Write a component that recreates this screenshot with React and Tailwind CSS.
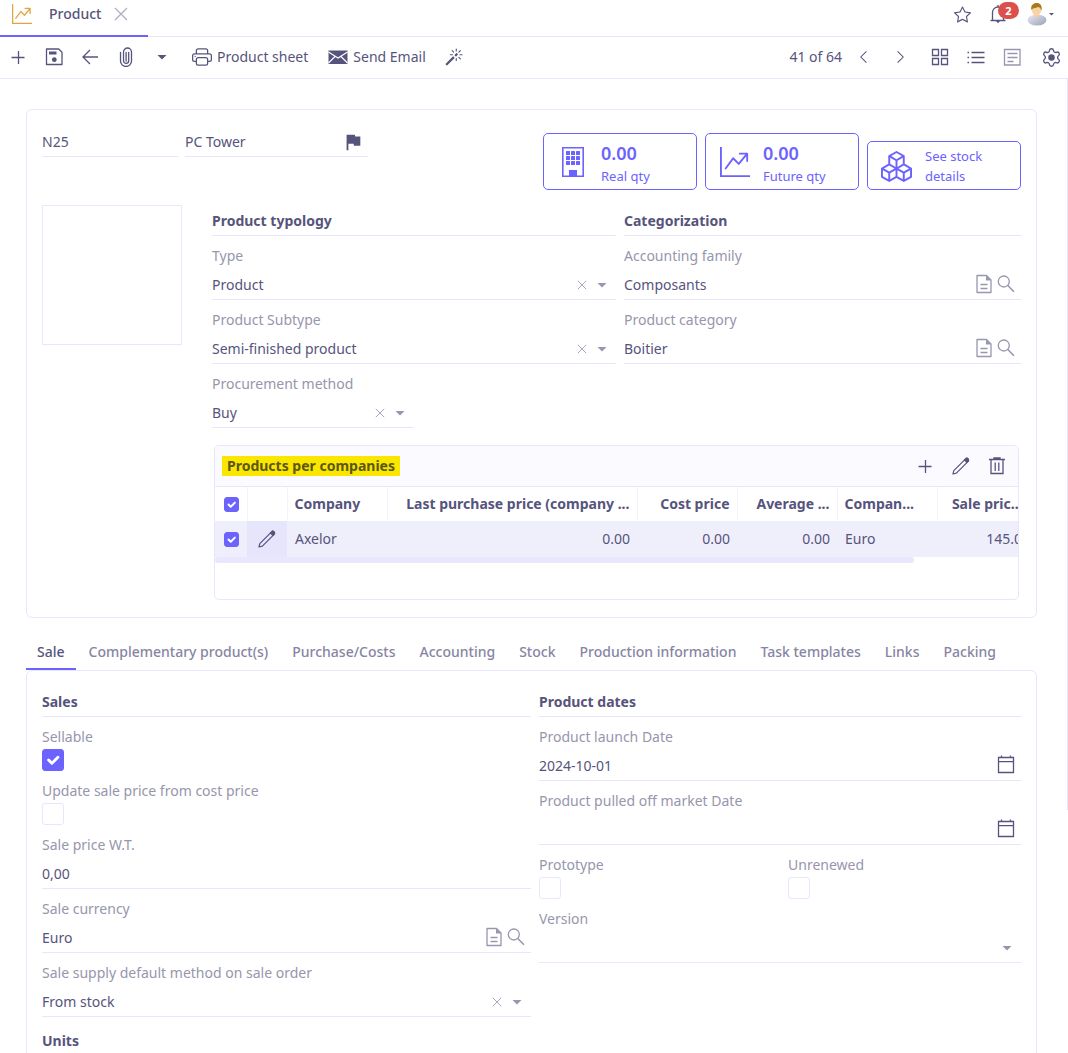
import React from "react";
import { BsBoxes, BsGraphUpArrow, BsMagic, BsPrinter, BsStar } from "react-icons/bs";
import { MdFlag } from "react-icons/md";
import { Settings } from "lucide-react";

/* ---------- icons ---------- */

const Svg = ({ size = 20, sw = 1.3, className = "", children }) => (
  <svg
    width={size}
    height={size}
    viewBox="0 0 20 20"
    fill="none"
    stroke="currentColor"
    strokeWidth={sw}
    className={className}
    aria-hidden="true"
  >
    {children}
  </svg>
);

const PlusIcon = () => (
  <Svg>
    <path d="M3.5 10.5h13M10.5 4v13" />
  </Svg>
);

const SaveIcon = () => (
  <Svg>
    <path d="M2.5 2h12.2L18 5.3V17.5H2.5z" strokeLinejoin="round" />
    <path d="M5 4.5h7.5v3H5z" fill="currentColor" stroke="none" />
    <circle cx="10.3" cy="12.7" r="2.4" fill="currentColor" stroke="none" />
  </Svg>
);

const BackIcon = () => (
  <Svg>
    <path d="M18 10H3.5M10 3L3 10l7 7" />
  </Svg>
);

const ClipIcon = () => (
  <Svg>
    <path d="M12.5 5v9a2.500 2.500 0 0 1-5 0V4.500a3.500 3.500 0 0 1 0 0" stroke="none" />
    <path
      d="M12.700 5.500v8.300a2.600 2.600 0 0 1-5.200 0V5a4 4 0 0 1 8 0v9a5.500 5.500 0 0 1-11 0V5.500M10.100 5.500v8.500"
      strokeLinecap="round"
    />
  </Svg>
);

const MailIcon = () => (
  <Svg>
    <path d="M.5 3.500h19v13.500H.5z" fill="currentColor" stroke="none" />
    <path d="M.5 5l9.500 6 9.500-6M.5 16l6.500-6.500M19.500 16L13 9.500" stroke="white" strokeWidth="1.1" />
  </Svg>
);

const CaretIcon = () => (
  <Svg>
    <path d="M5.5 8h9L10 12.5z" fill="currentColor" stroke="none" />
  </Svg>
);

const CrossIcon = ({ size, sw = 1.2 }) => (
  <Svg size={size} sw={sw}>
    <path d="M4 4l12 12M16 4L4 16" />
  </Svg>
);

const DocIcon = () => (
  <Svg>
    <path d="M3 1.5h9.5L17 6v12.5H3z" strokeLinejoin="round" />
    <path d="M12 1.5V6.5h5z" fill="currentColor" stroke="none" />
    <path d="M6.5 10.5h7M6.5 14.5h7" />
  </Svg>
);

const SearchIcon = () => (
  <Svg>
    <circle cx="7.8" cy="7.5" r="5.5" />
    <path d="M11.8 11.5L18 17.7" strokeWidth="1.6" />
  </Svg>
);

const CalendarIcon = () => (
  <Svg>
    <path d="M2.5 3.5h15v15h-15zM2.5 7.7h15M5.5 1.5v2M14.5 1.5v2" />
  </Svg>
);

const PencilIcon = () => (
  <Svg sw={1.2}>
    <path d="M2 18l.8-3.3L14.6 2.9a1.7 1.7 0 0 1 2.5 2.4L5.4 17.2z" strokeLinejoin="round" />
    <path d="M13.4 4.1l1.2-1.2a1.7 1.7 0 0 1 2.5 2.4l-1.2 1.2z" fill="currentColor" />
  </Svg>
);

const TrashIcon = () => (
  <Svg>
    <path d="M2 3.5h16M7 3.5V2h6v1.5M4 3.5v14h12v-14M8.2 6.5v8.5M11.8 6.5v8.5" />
  </Svg>
);

const BellIcon = () => (
  <Svg>
    <path d="M2.5 16.5h15M4.5 16.5V8.5a5.5 5.5 0 0 1 11 0v8M10 1v2" />
    <path d="M8 17h4l-2 2.2z" fill="currentColor" stroke="none" />
  </Svg>
);

const BuildingIcon = () => (
  <svg width="24" height="32" viewBox="0 0 24 32" fill="currentColor" aria-hidden="true">
    <path d="M1.800 1.800h20.400v28.400H1.800z" fill="none" stroke="currentColor" strokeWidth="1.6" />
    {[5, 10, 15].map((y) =>
      [5, 10, 15].map((x) => (
        <rect key={`${x}-${y}`} x={x} y={y} width="4" height="4" rx="0.5" />
      ))
    )}
    <path d="M8 24h8v6H8z" />
  </svg>
);

const AvatarIcon = () => (
  <svg width="22" height="24" viewBox="0 0 22 24" aria-hidden="true">
    <defs>
      <linearGradient id="shirt" x1="0" y1="0" x2="1" y2="1">
        <stop offset="0" stopColor="#e9ebf4" />
        <stop offset="1" stopColor="#9a9fb8" />
      </linearGradient>
    </defs>
    <ellipse cx="11" cy="18" rx="9.5" ry="5.5" fill="url(#shirt)" />
    <path d="M8 13h5l-1.5 3.5z" fill="#f3c99b" />
    <ellipse cx="10.5" cy="8" rx="4.6" ry="5.8" fill="#f8d3a4" />
    <path d="M5.3 8C4.500 3 7.500 1 10.500 1c3.800 0 6 2.500 5 8-.6-2-1.500-3.500-3-4-2 1-5 .5-7.200 3z" fill="#a87a1e" />
  </svg>
);

/* ---------- form parts ---------- */

const IconButton = ({ label, className = "w-9", children }) => (
  <button
    type="button"
    aria-label={label}
    className={`flex h-9 shrink-0 items-center justify-center ${className}`}
  >
    {children}
  </button>
);

const Heading = ({ children }) => (
  <h2 className="border-b border-[#e8e6fd] pb-1 text-sm leading-5 font-bold">{children}</h2>
);

const Field = ({ id, label, className = "", children }) => (
  <div className={`pt-[10px] ${className}`}>
    <label htmlFor={id} className="block leading-5 text-[#9796ac]">
      {label}
    </label>
    <div className="flex h-[34px] items-center border-b border-[#e8e6fd]">{children}</div>
  </div>
);

const SelectField = ({ id, label, value, className }) => (
  <Field id={id} label={label} className={className}>
    <select id={id} className="h-full min-w-0 flex-1 appearance-none bg-transparent pt-1 outline-none">
      <option>{value}</option>
    </select>
    <div className="flex pt-1 pr-1 text-[#9796b0]">
      {value && (
        <button type="button" aria-label={`Clear ${label}`} className="flex w-5 items-center justify-center">
          <CrossIcon size={14} />
        </button>
      )}
      <CaretIcon />
    </div>
  </Field>
);

const RelationField = ({ id, label, value }) => (
  <Field id={id} label={label}>
    <input id={id} defaultValue={value} className="h-full min-w-0 flex-1 bg-transparent pt-1 outline-none" />
    <div className="flex gap-[2px] pt-[2px] pr-[5px] text-[#9796b0]">
      <button type="button" aria-label={`Open ${label}`}>
        <DocIcon />
      </button>
      <button type="button" aria-label={`Search ${label}`}>
        <SearchIcon />
      </button>
    </div>
  </Field>
);

const DateField = ({ id, label, value }) => (
  <Field id={id} label={label}>
    <input id={id} defaultValue={value} className="h-full min-w-0 flex-1 bg-transparent pt-1 outline-none" />
    <button type="button" aria-label={`Pick ${label}`} className="pr-[5px]">
      <CalendarIcon />
    </button>
  </Field>
);

const Tick = ({ id, label, checked, small }) => (
  <span className={`relative block ${small ? "size-[15px]" : "size-[22px]"}`}>
    <input
      id={id}
      type="checkbox"
      aria-label={label}
      defaultChecked={checked}
      className="peer block size-full appearance-none rounded-[3px] border border-[#e8e6fd] bg-white checked:border-[#6c63ff] checked:bg-[#6c63ff]"
    />
    <svg
      viewBox="0 0 20 20"
      fill="none"
      stroke="white"
      strokeWidth="2.6"
      strokeLinecap="round"
      strokeLinejoin="round"
      className="pointer-events-none absolute inset-0 hidden size-full peer-checked:block"
      aria-hidden="true"
    >
      <path d="M6 10l3 3 5.500-5.500" />
    </svg>
  </span>
);

const CheckField = ({ id, label, checked }) => (
  <div className="pt-[10px]">
    <label htmlFor={id} className="mb-[2px] block leading-5 text-[#9796ac]">
      {label}
    </label>
    <Tick id={id} checked={checked} />
  </div>
);

const StatButton = ({ icon, value, children }) => (
  <button
    type="button"
    className="flex w-[154px] items-center rounded-[5px] border border-[#6c63ff] pt-1 pr-3 pb-[3px] text-left text-[#6c63ff]"
  >
    <span className="flex w-[57px] shrink-0 justify-center">{icon}</span>
    <span className="text-[13px] leading-5">
      {value && <span className="block pt-[2px] text-lg leading-[26px] font-semibold">{value}</span>}
      {children}
    </span>
  </button>
);

/* ---------- page ---------- */

const Header = () => (
  <header className="flex h-[37px] shrink-0 items-start justify-between border-b border-[#e8e6fd]">
    <div className="flex h-[37px] w-[148px] items-center border-b-2 border-[#6c63ff] pb-[7px] pl-3">
      <BsGraphUpArrow size={20} className="text-[#e0a63e]" />
      <span className="ml-[17px] leading-5 font-medium">Product</span>
      <button type="button" aria-label="Close tab" className="ml-[10px] text-[#aeadc2]">
        <CrossIcon size={20} />
      </button>
    </div>
    <div className="flex h-7 items-center">
      <IconButton label="Favorites">
        <BsStar size={17} />
      </IconButton>
      <button type="button" aria-label="Notifications" className="relative mr-[10px] flex w-9 justify-center">
        <BellIcon />
        <span className="absolute -top-[2px] left-[18px] flex h-[17px] w-[21px] items-center justify-center rounded-full bg-[#dc4f4c] text-[11px] font-bold text-white">
          2
        </span>
      </button>
      <button type="button" aria-label="Account" className="mr-3 flex items-center">
        <AvatarIcon />
        <svg width="8" height="8" viewBox="0 0 8 8" fill="currentColor" aria-hidden="true">
          <path d="M1 3h5L3.500 5.500z" />
        </svg>
      </button>
    </div>
  </header>
);

const Toolbar = () => (
  <div className="flex h-[42px] shrink-0 items-center justify-between border-b border-[#e8e6fd] pb-px">
    <div className="flex items-center">
      <IconButton label="New">
        <PlusIcon />
      </IconButton>
      <IconButton label="Save">
        <SaveIcon />
      </IconButton>
      <IconButton label="Back">
        <BackIcon />
      </IconButton>
      <IconButton label="Attachments">
        <ClipIcon />
      </IconButton>
      <IconButton label="More" className="mr-[2px] w-9">
        <CaretIcon />
      </IconButton>
      <button type="button" className="flex items-center gap-[5px] px-[10px]">
        <BsPrinter size={20} />
        Product sheet
      </button>
      <button type="button" className="flex items-center gap-[5px] px-[10px]">
        <MailIcon />
        Send Email
      </button>
      <IconButton label="Assistant">
        <BsMagic size={18} />
      </IconButton>
    </div>
    <div className="flex items-center">
      <span className="mr-1">41 of 64</span>
      <IconButton label="Previous">
        <Svg size={16}>
          <path d="M13 3l-7 7 7 7" />
        </Svg>
      </IconButton>
      <IconButton label="Next" className="mr-1 w-9">
        <Svg size={16}>
          <path d="M7 3l7 7-7 7" />
        </Svg>
      </IconButton>
      <IconButton label="Cards view">
        <Svg>
          <path d="M2.500 2.500h6v6h-6zM11.500 2.500h6v6h-6zM2.500 11.500h6v6h-6zM11.500 11.500h6v6h-6z" />
        </Svg>
      </IconButton>
      <IconButton label="List view">
        <Svg>
          <path d="M5.500 5.500h13M5.500 10.500h13M5.500 15.500h13" />
          <path d="M1.500 5.500h1.500M1.500 10.500h1.500M1.500 15.500h1.500" />
        </Svg>
      </IconButton>
      <IconButton label="Form view" className="mr-1 w-9 text-[#9796b0]">
        <Svg>
          <path d="M2.500 2.500h15.500v15.500h-15.500zM5.500 6.500h10M5.500 10.500h10M5.500 14.500h6" />
        </Svg>
      </IconButton>
      <IconButton label="Settings" className="w-[34px]">
        <Settings size={21} strokeWidth={1.500} className="[&>circle]:fill-current" />
      </IconButton>
    </div>
  </div>
);

const columns = [
  { title: "Company", value: "Axelor", head: "w-[100px] pr-[7px] text-left" },
  {
    title: "Last purchase price (company ...",
    value: "0.00",
    head: "w-[250px] pr-[7px] text-right",
    right: true,
  },
  { title: "Cost price", value: "0.00", head: "w-[100px] pr-[7px] text-right", right: true },
  { title: "Average ...", value: "0.00", head: "w-[100px] pr-[7px] text-right", right: true },
  { title: "Compan...", value: "Euro", head: "w-[100px] pr-[7px] text-left" },
  { title: "Sale pric...", value: "145.00", head: "w-[100px] pr-[14px] text-right", right: true },
];

const CompaniesGrid = () => (
  <div className="mx-[2px] mt-[17px] overflow-hidden rounded-[5px] border border-[#e8e6fd] pb-9">
    <div className="flex h-[41px] items-center justify-between border-b border-[#e8e6fd] bg-[#fbfaff] pr-[3px] pl-[7px]">
      <h3 className="bg-[#fbe600] px-[5px] leading-5 font-bold text-[#5a5712]">Products per companies</h3>
      <div className="flex">
        <IconButton label="Add line">
          <PlusIcon />
        </IconButton>
        <IconButton label="Edit line">
          <PencilIcon />
        </IconButton>
        <IconButton label="Delete line">
          <TrashIcon />
        </IconButton>
      </div>
    </div>
    <div className="overflow-hidden">
      <table className="w-[822px] table-fixed">
        <thead>
          <tr className="h-[34px]">
            <th className="w-8 border-r border-[#f3f2fe] pl-[9px]">
              <Tick label="Select all lines" checked small />
            </th>
            <th className="w-10 border-r border-[#f3f2fe]" />
            {columns.map((c) => (
              <th
                key={c.title}
                className={`border-r border-[#f3f2fe] pl-[7px] font-bold whitespace-nowrap ${c.head}`}
              >
                {c.title}
              </th>
            ))}
          </tr>
        </thead>
        <tbody>
          <tr className="h-9 bg-[#efeefb]">
            <td className="pl-[9px]">
              <Tick label="Select Axelor" checked small />
            </td>
            <td className="bg-[#e6e5fb]">
              <button type="button" aria-label="Edit Axelor" className="flex w-full justify-center">
                <PencilIcon />
              </button>
            </td>
            {columns.map((c) => (
              <td key={c.title} className={`pr-[7px] pl-2 ${c.right ? "text-right" : ""}`}>
                {c.value}
              </td>
            ))}
          </tr>
        </tbody>
      </table>
    </div>
    <div className="h-[6px] w-[87%] rounded-full bg-[#e8e7fe]" />
  </div>
);

const Overview = () => (
  <section className="rounded-md border border-[#e8e6fd] px-[15px] pt-[23px] pb-[17px]">
    <div className="flex items-start justify-between">
      <div className="flex gap-[7px]">
        <div className="flex h-6 w-[136px] items-center border-b border-[#e8e6fd] pb-[5px]">
          <input aria-label="Code" defaultValue="N25" className="min-w-0 flex-1 outline-none" />
        </div>
        <div className="flex h-6 w-[183px] items-center border-b border-[#e8e6fd] pb-[5px]">
          <input aria-label="Name" defaultValue="PC Tower" className="min-w-0 flex-1 outline-none" />
          <button type="button" aria-label="Translate" className="pr-1">
            <MdFlag size={22} />
          </button>
        </div>
      </div>
      <div className="flex items-end gap-2">
        <StatButton icon={<BuildingIcon />} value="0.00">
          Real qty
        </StatButton>
        <StatButton icon={<BsGraphUpArrow size={30} />} value="0.00">
          Future qty
        </StatButton>
        <StatButton icon={<BsBoxes size={31} />}>
          See stock
          <br />
          details
        </StatButton>
      </div>
    </div>

    <div className="mt-[15px] flex gap-[30px]">
      <div className="size-[140px] shrink-0 border border-[#e8e6fd]" />
      <div className="min-w-0 flex-1 pt-[6px]">
        <div className="grid grid-cols-[404fr_397fr] gap-2">
          <div>
            <Heading>Product typology</Heading>
            <SelectField id="type" label="Type" value="Product" />
            <SelectField id="subtype" label="Product Subtype" value="Semi-finished product" />
            <SelectField id="procurement" label="Procurement method" value="Buy" className="w-1/2" />
          </div>
          <div>
            <Heading>Categorization</Heading>
            <RelationField id="family" label="Accounting family" value="Composants" />
            <RelationField id="category" label="Product category" value="Boitier" />
          </div>
        </div>
        <CompaniesGrid />
      </div>
    </div>
  </section>
);

const tabs = [
  "Sale",
  "Complementary product(s)",
  "Purchase/Costs",
  "Accounting",
  "Stock",
  "Production information",
  "Task templates",
  "Links",
  "Packing",
];

const Tabs = () => (
  <nav className="mt-4 flex gap-[2px]">
    {tabs.map((tab, i) => (
      <button
        key={tab}
        type="button"
        className={`h-9 border-b-2 px-[11px] pt-[2px] font-medium whitespace-nowrap ${
          i === 0 ? "border-[#6c63ff]" : "border-transparent text-[#8785a3]"
        }`}
      >
        {tab}
      </button>
    ))}
  </nav>
);

const SalePanel = () => (
  <section className="grid min-h-[420px] grid-cols-[489fr_482fr] gap-2 rounded-md border border-[#e8e6fd] px-[15px] pt-[21px] pb-5">
    <div>
      <Heading>Sales</Heading>
      <CheckField id="sellable" label="Sellable" checked />
      <CheckField id="update-price" label="Update sale price from cost price" />
      <Field id="price" label="Sale price W.T.">
        <input id="price" defaultValue="0,00" className="h-full min-w-0 flex-1 bg-transparent pt-1 outline-none" />
      </Field>
      <RelationField id="currency" label="Sale currency" value="Euro" />
      <SelectField id="supply" label="Sale supply default method on sale order" value="From stock" />
      <div className="pt-[14px]">
        <Heading>Units</Heading>
      </div>
    </div>
    <div>
      <Heading>Product dates</Heading>
      <DateField id="launch" label="Product launch Date" value="2024-10-01" />
      <DateField id="pulled" label="Product pulled off market Date" value="" />
      <div className="grid grid-cols-2 gap-4">
        <CheckField id="prototype" label="Prototype" />
        <CheckField id="unrenewed" label="Unrenewed" />
      </div>
      <SelectField id="version" label="Version" value="" />
    </div>
  </section>
);

const App = () => {
  return (
    <div className="flex h-screen flex-col overflow-hidden bg-white font-['Noto_Sans','Open_Sans',sans-serif] text-sm text-[#56547c]">
      <Header />
      <Toolbar />
      <div className="flex min-h-0 flex-1">
        <main className="min-w-0 flex-1 overflow-y-auto pt-[30px] pr-[30px] pl-[26px] [scrollbar-width:none]">
          <Overview />
          <Tabs />
          <SalePanel />
        </main>
        <div className="h-3/4 w-px bg-[#e8e6fd]" />
      </div>
    </div>
  );
};

export default App;
